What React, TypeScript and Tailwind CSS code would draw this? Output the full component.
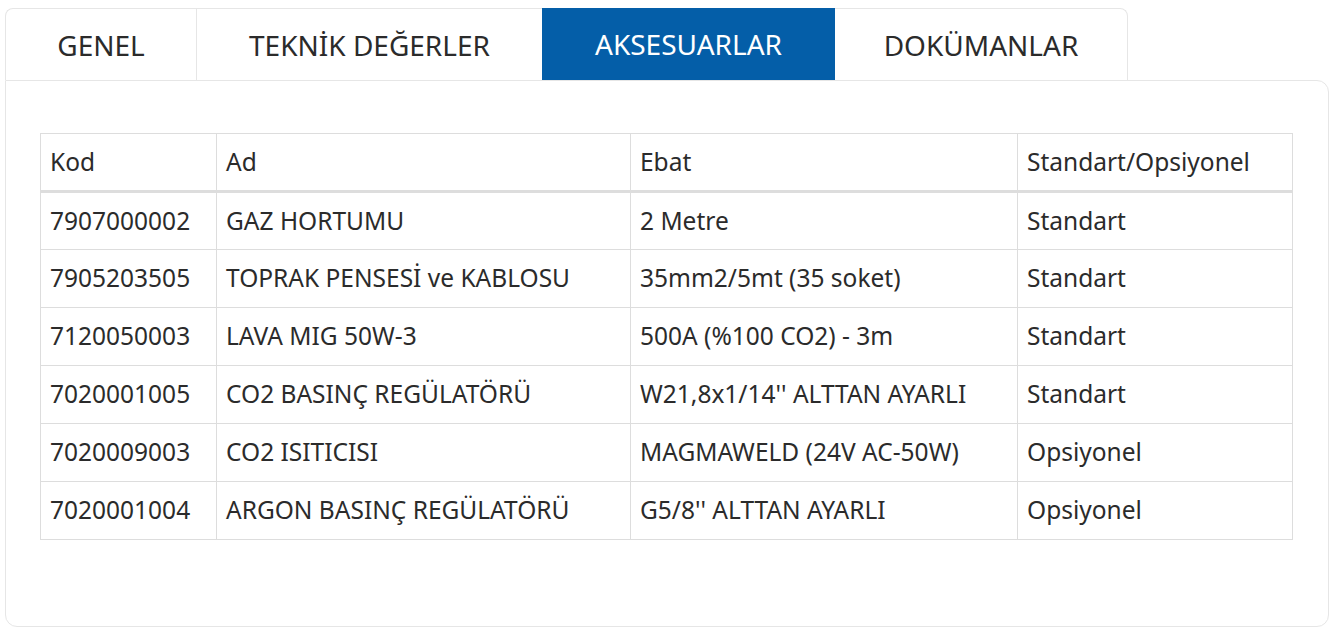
import React, { useState } from 'react';

const tabs = [
  { id: 'genel', label: 'GENEL', width: 'w-[191px]' },
  { id: 'teknik', label: 'TEKNİK DEĞERLER', width: 'w-[346px]' },
  { id: 'aksesuar', label: 'AKSESUARLAR', width: 'w-[293px]' },
  { id: 'dokuman', label: 'DOKÜMANLAR', width: 'w-[293px]' },
];

const rows = [
  { kod: '7907000002', ad: 'GAZ HORTUMU', ebat: '2 Metre', tip: 'Standart' },
  { kod: '7905203505', ad: 'TOPRAK PENSESİ ve KABLOSU', ebat: '35mm2/5mt (35 soket)', tip: 'Standart' },
  { kod: '7120050003', ad: 'LAVA MIG 50W-3', ebat: '500A (%100 CO2) - 3m', tip: 'Standart' },
  { kod: '7020001005', ad: 'CO2 BASINÇ REGÜLATÖRÜ', ebat: "W21,8x1/14'' ALTTAN AYARLI", tip: 'Standart' },
  { kod: '7020009003', ad: 'CO2 ISITICISI', ebat: 'MAGMAWELD (24V AC-50W)', tip: 'Opsiyonel' },
  { kod: '7020001004', ad: 'ARGON BASINÇ REGÜLATÖRÜ', ebat: "G5/8'' ALTTAN AYARLI", tip: 'Opsiyonel' },
];

const cell = 'border border-[#dddddd] px-[9px] text-left font-normal align-middle';

export default function App() {
  const [active, setActive] = useState('aksesuar');

  return (
    <div className="bg-white min-h-[632px] pt-[8px] px-[5px] font-['Noto_Sans',sans-serif] text-[#2b2b2b]">
      {/* sekmeler */}
      <div className="flex h-[72px]">
        {tabs.map((t, i) => {
          const isActive = t.id === active;
          return (
            <button
              key={t.id}
              onClick={() => setActive(t.id)}
              className={`${t.width} h-full flex items-center justify-center text-[28px] leading-none
                ${i === 0 ? 'rounded-tl-[8px] border-l' : ''}
                ${i === tabs.length - 1 ? 'rounded-tr-[8px] border-r' : ''}
                ${i === 1 ? 'border-l' : ''}
                ${isActive ? 'bg-[#045ea8] text-white' : 'bg-white border-t border-[#e6e6e6]'}`}
            >
              {t.label}
            </button>
          );
        })}
      </div>

      {/* panel */}
      <div className="border border-[#e6e6e6] rounded-b-[12px] rounded-tr-[12px] pt-[52px] pb-[86px] pl-[34px] pr-[35px]">
        <table className="w-full table-fixed border-collapse text-[24.5px] leading-none">
          <colgroup>
            <col className="w-[176px]" />
            <col className="w-[414px]" />
            <col className="w-[387px]" />
            <col />
          </colgroup>
          <thead>
            <tr className="h-[58px]">
              <th className={`${cell} border-b-[3px]`}>Kod</th>
              <th className={`${cell} border-b-[3px]`}>Ad</th>
              <th className={`${cell} border-b-[3px]`}>Ebat</th>
              <th className={`${cell} border-b-[3px]`}>Standart/Opsiyonel</th>
            </tr>
          </thead>
          <tbody>
            {rows.map((r) => (
              <tr key={r.kod} className="h-[58px]">
                <td className={cell}>{r.kod}</td>
                <td className={cell}>{r.ad}</td>
                <td className={cell}>{r.ebat}</td>
                <td className={cell}>{r.tip}</td>
              </tr>
            ))}
          </tbody>
        </table>
      </div>
    </div>
  );
}
